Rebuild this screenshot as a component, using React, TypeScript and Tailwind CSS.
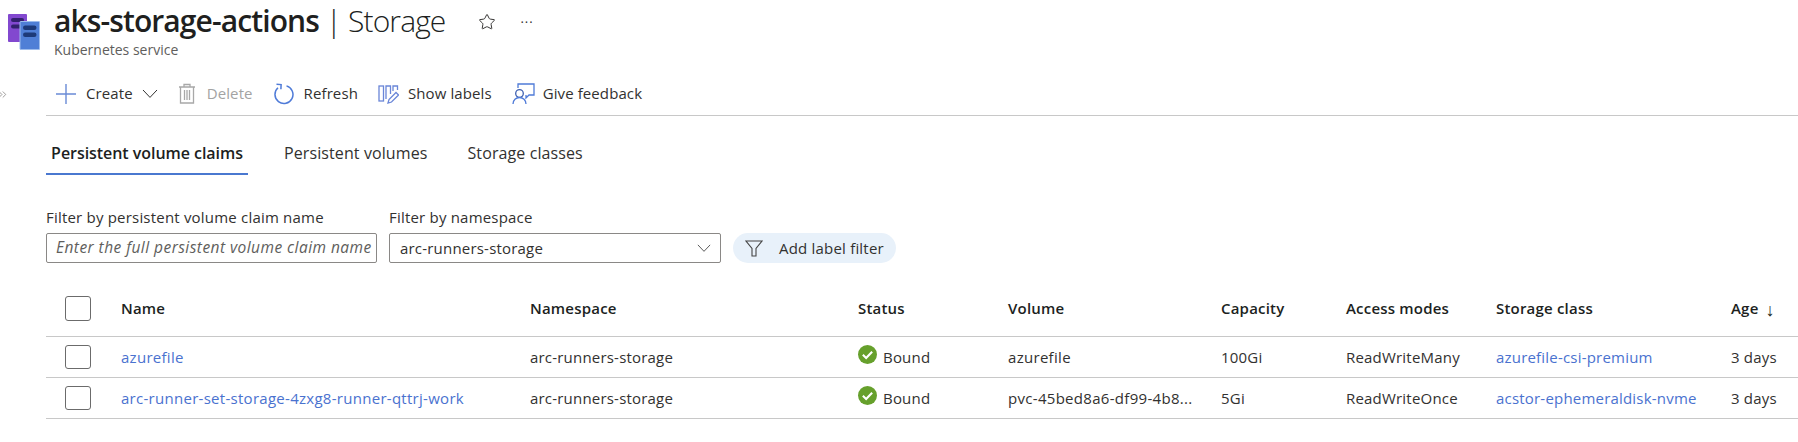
import { ChevronsRight, Star } from "lucide-react";

const FONT = "font-['Open_Sans','Noto_Sans',sans-serif]";

const COLUMNS = "grid grid-cols-[56px_409px_328px_150px_213px_125px_150px_235px_1fr] items-center";

const ROWS = [
  {
    name: "azurefile",
    volume: "azurefile",
    capacity: "100Gi",
    access: "ReadWriteMany",
    storageClass: "azurefile-csi-premium",
  },
  {
    name: "arc-runner-set-storage-4zxg8-runner-qttrj-work",
    volume: "pvc-45bed8a6-df99-4b8...",
    capacity: "5Gi",
    access: "ReadWriteOnce",
    storageClass: "acstor-ephemeraldisk-nvme",
  },
];

function ServiceLogo() {
  return (
    <svg width="32" height="36" viewBox="0 0 32 36" className="shrink-0">
      <rect x="0" y="0" width="19" height="28" rx="1" fill="#8248cf" />
      <rect x="3" y="4" width="13" height="4" rx="2" fill="#33206e" />
      <rect x="3" y="10.5" width="13" height="4" rx="2" fill="#33206e" />
      <rect x="12" y="7.5" width="19.5" height="28" rx="0.5" fill="#4f7fd6" stroke="#9dbcec" strokeWidth="1" />
      <rect x="15" y="11.5" width="13.5" height="4.5" rx="2.2" fill="#1d3a78" />
      <rect x="15" y="18.5" width="13.5" height="4.5" rx="2.2" fill="#1d3a78" />
    </svg>
  );
}

function Plus() {
  return (
    <svg width="22" height="22" viewBox="0 0 22 22" fill="none" stroke="#6a8bd6" strokeWidth="1.4">
      <path d="M11 1v20M1 11h20" />
    </svg>
  );
}

function Chevron({ width = 16, color = "#323130" }: { width?: number; color?: string }) {
  return (
    <svg width={width} height={width * 0.6} viewBox="0 0 16 9.6" fill="none" stroke={color} strokeWidth="1">
      <path d="M1 1l7 7.4L15 1" />
    </svg>
  );
}

function TrashIcon() {
  return (
    <svg width="18" height="21" viewBox="0 0 18 21" fill="none" stroke="#a8a8a8" strokeWidth="1.3">
      <path d="M1 4h16M6 4V1.5h6V4" />
      <path d="M2.5 4v16h13V4" />
      <path d="M6.5 7v10M9 7v10M11.5 7v10" />
    </svg>
  );
}

function RefreshIcon() {
  return (
    <svg width="22" height="22" viewBox="0 0 22 22" fill="none" stroke="#4f7bd8" strokeWidth="1.5">
      <path d="M13.5 2.9a9 9 0 1 1-8.5 1.9" />
      <path d="M3.5 1.3l4.6 0.3-0.2 4.6" />
    </svg>
  );
}

function LabelsIcon() {
  return (
    <svg width="21" height="20" viewBox="0 0 21 20" fill="none" stroke="#6a86d8" strokeWidth="1.3">
      <rect x="1" y="2" width="4.5" height="15" />
      <path d="M8 15V2h4.5v8" />
      <path d="M15 7V2h4.5v4" />
      <path d="M10 19l1-3.5 7-7 2.5 2.5-7 7z" />
    </svg>
  );
}

function FeedbackIcon() {
  return (
    <svg width="23" height="22" viewBox="0 0 23 22" fill="none" stroke="#4f7bd8" strokeWidth="1.3">
      <path d="M6 5V1h16v11h-5l-3 3v-3" />
      <circle cx="7.5" cy="10.5" r="3.8" stroke="#3d5fb0" />
      <path d="M1 21c0-4 3-6.5 6.5-6.5S14 17 14 21" />
    </svg>
  );
}

function FunnelIcon() {
  return (
    <svg width="18" height="18" viewBox="0 0 18 18" fill="none" stroke="#444" strokeWidth="1.1">
      <path d="M1 2h16l-6 7.5V17H7V9.5z" />
    </svg>
  );
}

function BoundIcon() {
  return (
    <svg width="19" height="19" viewBox="0 0 18 18" className="-mt-[5px]">
      <circle cx="9" cy="9" r="9" fill="#66a02c" />
      <path d="M4.6 9.3l3.1 3 5.7-6" fill="none" stroke="#fff" strokeWidth="2" />
    </svg>
  );
}

function Checkbox({ tall }: { tall?: boolean }) {
  return <div className={`w-[26px] rounded-[3px] border border-[#6b6b6b] bg-white ${tall ? "h-[25px]" : "h-[24px]"}`} />;
}

function ToolbarButton({
  icon,
  label,
  disabled,
  gap = "gap-[9px]",
}: {
  icon: React.ReactNode;
  label: string;
  disabled?: boolean;
  gap?: string;
}) {
  return (
    <div className={`flex items-center ${gap} ${disabled ? "text-[#a3a3a3]" : "text-[#323130]"}`}>
      {icon}
      <span>{label}</span>
    </div>
  );
}

export default function App() {
  return (
    <div className={`${FONT} h-[442px] w-[1798px] overflow-hidden bg-white text-[15px] tracking-[0.2px] text-[#323130]`}>
      <header className="flex h-[72px] items-start pl-2 pt-[14px]">
        <ServiceLogo />
        <div className="ml-[14px] -mt-[15px]">
          <div className="flex items-center">
            <h1 className="text-[30px] leading-[44px] tracking-[-0.9px] text-[#201f1e]">
              <span className="font-semibold">aks-storage-actions</span>
              <span className="font-light"> | Storage</span>
            </h1>
            <Star className="ml-[33px] mt-[2px] size-[18px] text-[#323130]" strokeWidth={1.3} />
            <span className="ml-[24px] mt-[3px] text-[13px] tracking-[1px]">···</span>
          </div>
          <div className="-mt-[2px] text-[14px] leading-[18px] tracking-normal text-[#605e5c]">Kubernetes service</div>
        </div>
      </header>

      <div className="flex">
        <div className="flex w-[46px] justify-start pt-[16px]">
          <ChevronsRight className="-ml-[4px] size-[13px] text-[#8a8886]" strokeWidth={1.5} />
        </div>

        <main className="min-w-0 flex-1">
          <div className="flex h-[44px] items-center gap-5 border-b border-[#c8c8c8] pl-[9px] tracking-[0.1px]">
            <div className="flex items-center gap-[9px]">
              <Plus />
              <span>Create</span>
              <Chevron />
            </div>
            <ToolbarButton disabled gap="gap-[11px]" icon={<TrashIcon />} label="Delete" />
            <ToolbarButton icon={<RefreshIcon />} label="Refresh" />
            <ToolbarButton icon={<LabelsIcon />} label="Show labels" />
            <ToolbarButton gap="gap-[8px]" icon={<FeedbackIcon />} label="Give feedback" />
          </div>

          <div className="mt-[15px] flex h-[44px] text-[16px] tracking-[0.1px]">
            <div className="flex w-[202px] justify-center border-b-2 border-[#4a78d0] pt-[10px] font-semibold tracking-[-0.05px] text-[#201f1e]">
              Persistent volume claims
            </div>
            <div className="ml-[36px] pt-[10px]">Persistent volumes</div>
            <div className="ml-[40px] pt-[10px]">Storage classes</div>
          </div>

          <div className="mt-[32px] flex items-end">
            <label className="block w-[331px]">
              <div className="mb-[6px] leading-[20px]">Filter by persistent volume claim name</div>
              <div className="flex h-[30px] w-[331px] items-center overflow-hidden whitespace-nowrap rounded-[2px] border border-[#8a8886] pl-[9px] text-[15.5px] italic tracking-[0.45px] text-[#605e5c]">
                Enter the full persistent volume claim name
              </div>
            </label>
            <label className="ml-3 block">
              <div className="mb-[6px] leading-[20px]">Filter by namespace</div>
              <div className="flex h-[30px] w-[332px] items-center justify-between rounded-[2px] border border-[#8a8886] pl-[10px] pr-[9px]">
                <span>arc-runners-storage</span>
                <Chevron width={14} color="#444" />
              </div>
            </label>
            <div className="ml-[12px] flex h-[30px] w-[163px] items-center gap-[16px] rounded-full bg-[#e8f1fa] pl-[12px] tracking-[0.2px]">
              <FunnelIcon />
              <span>Add label filter</span>
            </div>
          </div>

          <div className="mt-[14px]">
            <div className={`${COLUMNS} h-[60px] border-b border-[#c8c8c8] pb-[2px] pl-[19px] pt-[6px] font-semibold text-[#201f1e]`}>
              <Checkbox tall />
              <div>Name</div>
              <div>Namespace</div>
              <div>Status</div>
              <div>Volume</div>
              <div>Capacity</div>
              <div>Access modes</div>
              <div>Storage class</div>
              <div className="flex items-center gap-[7px]">
                Age <span className="text-[18px] font-normal leading-none">↓</span>
              </div>
            </div>
            {ROWS.map((row) => (
              <div key={row.name} className={`${COLUMNS} h-[41px] border-b border-[#c8c8c8] pl-[19px]`}>
                <Checkbox />
                <div className="tracking-[0.28px] text-[#4a72cf]">{row.name}</div>
                <div>arc-runners-storage</div>
                <div className="flex items-center gap-[6px]">
                  <BoundIcon />
                  <span>Bound</span>
                </div>
                <div className="tracking-[0.3px]">{row.volume}</div>
                <div>{row.capacity}</div>
                <div>{row.access}</div>
                <div className="text-[#4a72cf]">{row.storageClass}</div>
                <div>3 days</div>
              </div>
            ))}
          </div>
        </main>
      </div>
    </div>
  );
}
